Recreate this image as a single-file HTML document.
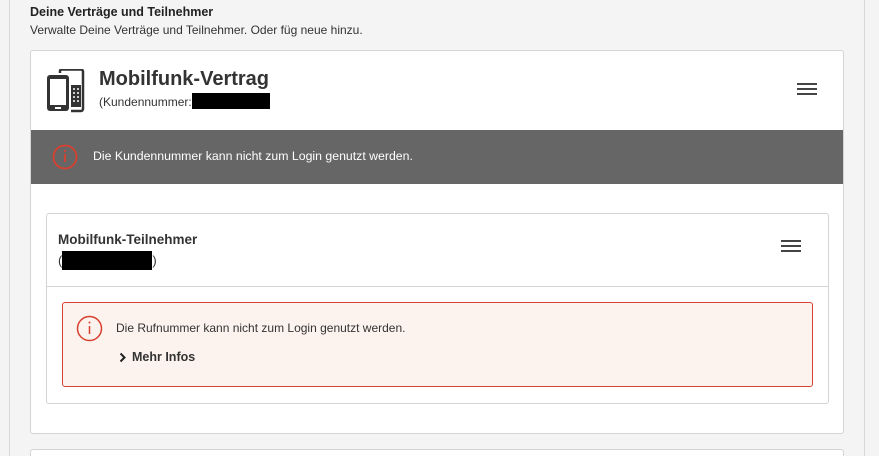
<!DOCTYPE html>
<html><head><meta charset="utf-8"><style>
*{box-sizing:border-box;margin:0;padding:0}
html,body{width:879px;height:456px;overflow:hidden}
body{background:#f4f4f4;font-family:"Liberation Sans",sans-serif;color:#333;position:relative}
.ln{position:absolute;top:0;height:456px;width:1px;background:#d8d8d8}
.abs{position:absolute}
.card{position:absolute;background:#fff;border:1px solid #d4d4d4;border-radius:3px}
.ham{position:absolute;width:20px;height:12px}
.ham i{display:block;height:2px;background:#444;margin-bottom:3px}
.blk{display:inline-block;background:#000;vertical-align:middle}
</style></head><body>
<div class="ln" style="left:9px"></div>
<div class="ln" style="left:864px"></div>
<div class="abs" style="left:30px;top:5px;font-size:12.5px;font-weight:bold;color:#222">Deine Verträge und Teilnehmer</div>
<div class="abs" style="left:30px;top:23px;font-size:12px;color:#333">Verwalte Deine Verträge und Teilnehmer. Oder füg neue hinzu.</div>

<div class="card" style="left:30px;top:50px;width:814px;height:384px;overflow:hidden">
  <svg class="abs" style="left:14px;top:18px" width="40" height="44" viewBox="0 0 40 44">
    <rect x="2" y="6" width="22" height="36" rx="3" fill="#333"/>
    <rect x="5" y="10" width="16" height="26" fill="#fff"/>
    <rect x="10" y="38" width="6" height="2" fill="#fff"/>
    <path d="M15 4 V2 a1.5 1.5 0 0 1 1.5 -1.5 H36 a2 2 0 0 1 2 2 V40 a2 2 0 0 1 -2 2 H26" fill="none" stroke="#333" stroke-width="2.5"/>
    <rect x="26" y="16" width="10" height="22" fill="#333"/>
    <path d="M28 20h2M32 20h2M28 24h2M32 24h2M28 28h2M32 28h2M28 32h2M32 32h2" stroke="#fff" stroke-width="1.5"/>
  </svg>
  <div class="abs" style="left:68px;top:17px;font-size:20px;font-weight:bold;color:#333">Mobilfunk-Vertrag</div>
  <div class="abs" style="left:68px;top:44px;font-size:12px;color:#333">(Kundennummer:<span class="blk" style="width:78px;height:16px;margin-top:-3px"></span></div>
  <div class="ham" style="left:766px;top:32px"><i></i><i></i><i></i></div>
  <div class="abs" style="left:0;top:79px;width:814px;height:54px;background:#666">
    <svg class="abs" style="left:21px;top:14px" width="26" height="26" viewBox="0 0 26 26"><circle cx="13" cy="13" r="11.5" fill="none" stroke="#d8412f" stroke-width="1.8"/><path d="M13 10v8" stroke="#d8412f" stroke-width="1.8"/><circle cx="13" cy="7" r="1.1" fill="#d8412f"/></svg>
    <div class="abs" style="left:62px;top:19px;font-size:12.3px;color:#fff">Die Kundennummer kann nicht zum Login genutzt werden.</div>
  </div>
  <div class="card" style="left:15px;top:162px;width:783px;height:191px">
    <div class="abs" style="left:11px;top:18px;font-size:13.5px;font-weight:bold;color:#333">Mobilfunk-Teilnehmer</div>
    <div class="abs" style="left:11px;top:39px;font-size:13px">(<span class="blk" style="width:90px;height:19px;margin-top:-3px"></span>)</div>
    <div class="ham" style="left:734px;top:26px"><i></i><i></i><i></i></div>
    <div class="abs" style="left:0;top:72px;width:781px;height:1px;background:#d4d4d4"></div>
    <div class="abs" style="left:15px;top:88px;width:751px;height:85px;background:#fdf3ee;border:1px solid #d8412f;border-radius:3px">
      <svg class="abs" style="left:13px;top:12px" width="27" height="27" viewBox="0 0 27 27"><circle cx="13.5" cy="13.5" r="12" fill="none" stroke="#d8412f" stroke-width="1.5"/><path d="M13.5 11v8" stroke="#d8412f" stroke-width="1.5"/><circle cx="13.5" cy="7.5" r="1" fill="#d8412f"/></svg>
      <div class="abs" style="left:53px;top:18px;font-size:12px;color:#333">Die Rufnummer kann nicht zum Login genutzt werden.</div>
      <svg class="abs" style="left:56px;top:49px" width="8" height="11" viewBox="0 0 8 11"><path d="M1.5 1.5l4 4-4 4" fill="none" stroke="#222" stroke-width="2"/></svg>
      <div class="abs" style="left:69px;top:47px;font-size:12.5px;font-weight:bold;color:#333">Mehr Infos</div>
    </div>
  </div>
</div>
<div class="abs" style="left:30px;top:449px;width:814px;height:7px;background:#fff;border:1px solid #d4d4d4;border-bottom:none;border-radius:3px 3px 0 0"></div>
</body></html>
